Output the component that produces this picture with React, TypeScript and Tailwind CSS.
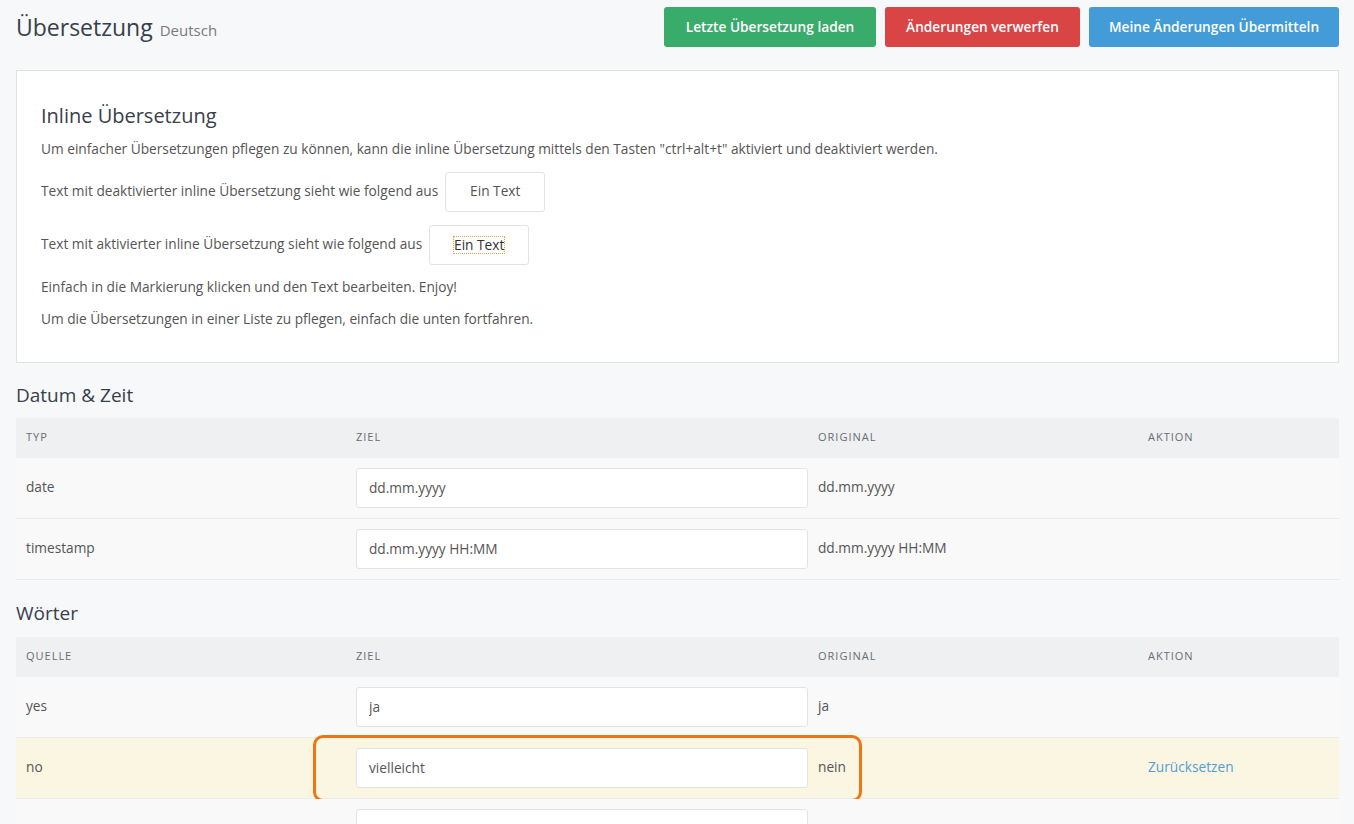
import type { ReactNode } from 'react';

const font = { fontFamily: '"Open Sans", "Noto Sans", sans-serif' };

const cols = 'grid grid-cols-[330px_462px_330px_1fr]';

function Heading({ children, className = 'pt-[20px] pb-[11px]' }: { children: ReactNode; className?: string }) {
  return <h2 className={`${className} text-[19px] leading-6 text-[#38404a]`}>{children}</h2>;
}

function TableHead({ first }: { first: string }) {
  return (
    <div className={`${cols} h-10 items-center bg-[#eff0f2] text-[11px] uppercase tracking-[0.09em] text-[#686d73]`}>
      <div className="pl-[10px]">{first}</div>
      <div className="pl-[10px]">Ziel</div>
      <div className="pl-[10px]">Original</div>
      <div className="pl-[10px]">Aktion</div>
    </div>
  );
}

interface RowProps {
  source: string;
  target: string;
  original: string;
  changed?: boolean;
  highlight?: boolean;
}

function Row({ source, target, original, changed, highlight }: RowProps) {
  return (
    <div
      className={`relative ${cols} h-[61px] items-center border-b border-[#ebebeb] text-[13.7px] text-[#555] ${
        changed ? 'bg-[#fbf6e2]' : 'bg-[#f9f9f9]'
      }`}
    >
      <div className="pl-[10px]">{source}</div>
      <div className="pl-[10px]">
        <input
          readOnly
          value={target}
          className="h-10 w-full rounded-[3px] border border-[#e3e3e3] bg-white px-3 text-[13.7px] text-[#555] outline-none"
          style={font}
        />
      </div>
      <div className="pl-[10px]">{original}</div>
      <div className="pl-[10px]">
        {changed && <span className="text-[#559dd6]">Zurücksetzen</span>}
      </div>
      {highlight && (
        <div className="pointer-events-none absolute left-[297px] top-[-3px] h-[67px] w-[549px] rounded-[10px] border-[3px] border-[#f07415]" />
      )}
    </div>
  );
}

export default function App() {
  return (
    <div className="min-h-screen bg-[#f6f8fa] pl-4 pr-[15px] pt-[7px] text-[13.7px] text-[#555]" style={font}>
      {/* Header */}
      <div className="flex items-center justify-between">
        <h1 className="flex items-baseline gap-[7px] text-[23px] text-[#38404a]">
          Übersetzung <span className="text-[15px] text-[#7a7a7a]">Deutsch</span>
        </h1>
        <div className="flex gap-[9px]">
          <button className="h-10 w-[212px] rounded-[3px] bg-[#39ab6b] text-[13.7px] font-semibold text-white">
            Letzte Übersetzung laden
          </button>
          <button className="h-10 w-[195px] rounded-[3px] bg-[#d94445] text-[13.7px] font-semibold text-white">
            Änderungen verwerfen
          </button>
          <button className="h-10 w-[250px] rounded-[3px] bg-[#439bd8] text-[13.7px] font-semibold text-white">
            Meine Änderungen Übermitteln
          </button>
        </div>
      </div>

      {/* Inline translation info */}
      <div className="mt-[23px] border border-[#e1e1e1] bg-white px-[24px] pb-[32px] pt-[33px]">
        <h2 className="text-[20px] leading-6 text-[#38404a]">Inline Übersetzung</h2>
        <p className="mt-[11px]">
          Um einfacher Übersetzungen pflegen zu können, kann die inline Übersetzung mittels den Tasten "ctrl+alt+t" aktiviert und deaktiviert werden.
        </p>
        <div className="mt-[12px] flex items-center gap-[7px]">
          <span>Text mit deaktivierter inline Übersetzung sieht wie folgend aus</span>
          <span className="flex h-10 w-[100px] items-center justify-center rounded-[3px] border border-[#e3e3e3] bg-white">
            Ein Text
          </span>
        </div>
        <div className="mt-[13px] flex items-center gap-[7px]">
          <span>Text mit aktivierter inline Übersetzung sieht wie folgend aus</span>
          <span className="flex h-10 w-[100px] items-center justify-center rounded-[3px] border border-[#e3e3e3] bg-white">
            <span className="border border-dotted border-[#e8a04a] leading-4 text-[#333]">Ein Text</span>
          </span>
        </div>
        <p className="mt-[12px]">Einfach in die Markierung klicken und den Text bearbeiten. Enjoy!</p>
        <p className="mt-[12px]">Um die Übersetzungen in einer Liste zu pflegen, einfach die unten fortfahren.</p>
      </div>

      {/* Date & time */}
      <Heading>Datum &amp; Zeit</Heading>
      <TableHead first="Typ" />
      <Row source="date" target="dd.mm.yyyy" original="dd.mm.yyyy" />
      <Row source="timestamp" target="dd.mm.yyyy HH:MM" original="dd.mm.yyyy HH:MM" />

      {/* Words */}
      <Heading className="pt-[21px] pb-[12px]">Wörter</Heading>
      <TableHead first="Quelle" />
      <Row source="yes" target="ja" original="ja" />
      <Row source="no" target="vielleicht" original="nein" changed highlight />
      <Row source="" target="" original="" />
    </div>
  );
}
